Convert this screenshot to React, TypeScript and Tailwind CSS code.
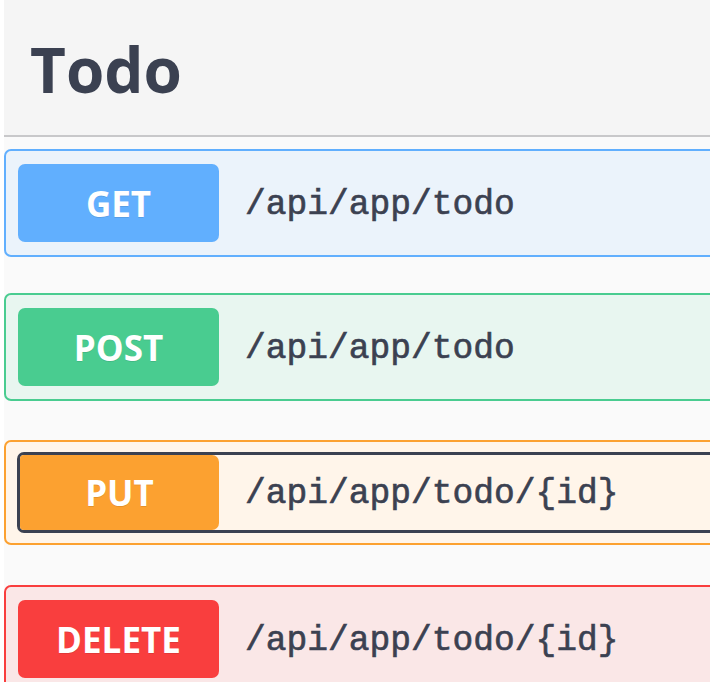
import React from "react";

type Op = {
  method: string;
  path: string;
  border: string;
  bg: string;
  badge: string;
  mt: string;
  focused?: boolean;
};

const ops: Op[] = [
  { method: "GET", path: "/api/app/todo", border: "border-[#61affe]", bg: "bg-[#ebf3fb]", badge: "bg-[#61affe]", mt: "mt-[12px]" },
  { method: "POST", path: "/api/app/todo", border: "border-[#49cc90]", bg: "bg-[#e8f6f0]", badge: "bg-[#49cc90]", mt: "mt-[36px]" },
  { method: "PUT", path: "/api/app/todo/{id}", border: "border-[#fca130]", bg: "bg-[#fff5ea]", badge: "bg-[#fca130]", mt: "mt-[39px]", focused: true },
  { method: "DELETE", path: "/api/app/todo/{id}", border: "border-[#f93e3e]", bg: "bg-[#fae7e7]", badge: "bg-[#f93e3e]", mt: "mt-[40px]" },
];

function Block({ op }: { op: Op }) {
  const inner = (
    <>
      <div
        className={`${op.badge} ${op.focused ? "w-[199px] h-[75px] rounded-r-[7px]" : "w-[201px] h-[78px] rounded-[7px]"} shrink-0 flex items-center justify-center text-white font-bold text-[35px] pt-[2px] [text-shadow:0_1px_0_rgba(0,0,0,0.1)]`}
        style={{ fontFamily: '"Open Sans", "Noto Sans", sans-serif' }}
      >
        {op.method}
      </div>
      <div
        className="pl-[26px] pt-[3px] text-[34.6px] text-[#3b4151] font-normal whitespace-nowrap [-webkit-text-stroke:0.6px_#3b4151]"
        style={{ fontFamily: '"Liberation Mono", "DejaVu Sans Mono", monospace' }}
      >
        {op.path}
      </div>
    </>
  );
  return (
    <div className={`${op.mt} border-2 ${op.border} ${op.bg} rounded-[7px] pl-[12px] pt-[13px] pb-[13px]`}>
      {op.focused ? (
        <div className="flex items-center -ml-[1px] -mt-[3px] -mb-[3px] border-[3px] border-[#3b4151] rounded-[7px] overflow-hidden">
          {inner}
        </div>
      ) : (
        <div className="flex items-center">{inner}</div>
      )}
    </div>
  );
}

export default function App() {
  return (
    <div className="w-[710px] h-[682px] overflow-hidden bg-white">
      <div className="ml-[4px] w-[900px] bg-[#fafafa] h-[682px]">
        <div className="h-[137px] flex items-center pl-[26px] bg-[#f5f5f5] border-b-2 border-[#c8c8ca]">
          <h1
            className="text-[62px] font-bold text-[#3b4151] leading-none mt-[2px]"
            style={{ fontFamily: '"Open Sans", "Noto Sans", sans-serif' }}
          >
            Todo
          </h1>
        </div>
        {ops.map((op) => (
          <Block key={op.method} op={op} />
        ))}
      </div>
    </div>
  );
}
